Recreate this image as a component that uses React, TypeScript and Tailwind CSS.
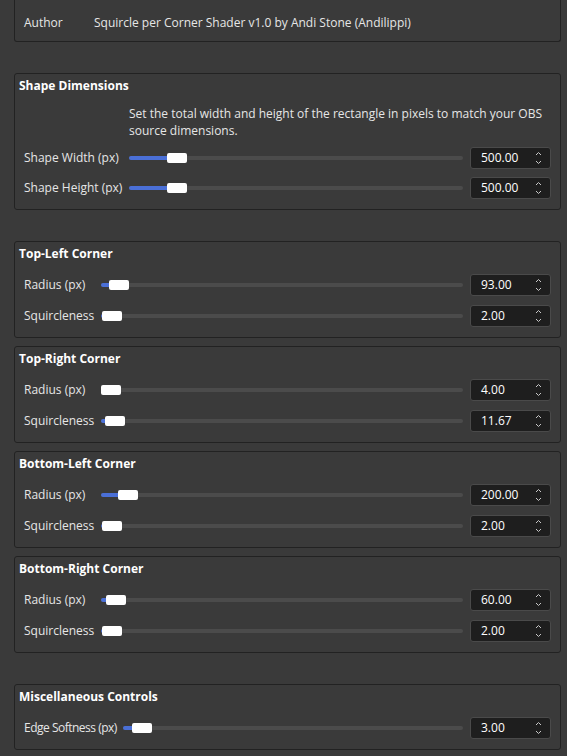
import React from "react";

type Row = { label: string; value: string; thumb: number };
type Group = { title: string; labelW: string; labelCls?: string; rows: Row[]; note?: string };

const shape: Group = {
  title: "Shape Dimensions",
  labelW: "grid-cols-[99px_1fr]",
  note: "Set the total width and height of the rectangle in pixels to match your OBS source dimensions.",
  rows: [
    { label: "Shape Width (px)", value: "500.00", thumb: 38 },
    { label: "Shape Height (px)", value: "500.00", thumb: 38 },
  ],
};

const corners: Group[] = [
  {
    title: "Top-Left Corner",
    labelW: "grid-cols-[71px_1fr]",
    rows: [
      { label: "Radius (px)", value: "93.00", thumb: 8 },
      { label: "Squircleness", value: "2.00", thumb: 1 },
    ],
  },
  {
    title: "Top-Right Corner",
    labelW: "grid-cols-[71px_1fr]",
    rows: [
      { label: "Radius (px)", value: "4.00", thumb: 0 },
      { label: "Squircleness", value: "11.67", thumb: 4 },
    ],
  },
  {
    title: "Bottom-Left Corner",
    labelW: "grid-cols-[71px_1fr]",
    rows: [
      { label: "Radius (px)", value: "200.00", thumb: 17 },
      { label: "Squircleness", value: "2.00", thumb: 1 },
    ],
  },
  {
    title: "Bottom-Right Corner",
    labelW: "grid-cols-[71px_1fr]",
    rows: [
      { label: "Radius (px)", value: "60.00", thumb: 5 },
      { label: "Squircleness", value: "2.00", thumb: 1 },
    ],
  },
];

const misc: Group = {
  title: "Miscellaneous Controls",
  labelW: "grid-cols-[93px_1fr]",
  labelCls: "tracking-[-0.5px]",
  rows: [{ label: "Edge Softness (px)", value: "3.00", thumb: 9 }],
};

function Slider({ thumb }: { thumb: number }) {
  return (
    <div className="relative h-[22px] flex-1">
      <div className="absolute left-0 right-0 top-[9px] h-[4px] rounded-[2px] bg-[#4b4b4b]" />
      <div
        className="absolute left-0 top-[9px] h-[4px] rounded-[2px] bg-[#4a6fd6]"
        style={{ width: thumb + 6 }}
      />
      <div
        className="absolute top-[6px] h-[10px] w-[20px] rounded-[2px] bg-white"
        style={{ left: thumb }}
      />
    </div>
  );
}

function SpinBox({ value }: { value: string }) {
  return (
    <div className="relative flex h-[22px] w-[81px] shrink-0 items-center rounded-[3px] border border-[#4a4a4a] bg-[#1e1e1e] pl-[10px] text-[12px] text-white">
      {value}
      <svg className="absolute right-[8px] top-[3px]" width="7" height="5" viewBox="0 0 7 5">
        <path d="M1 4 L3.5 1.5 L6 4" fill="none" stroke="#c8c8c8" strokeWidth="1" />
      </svg>
      <svg className="absolute bottom-[3px] right-[8px]" width="7" height="5" viewBox="0 0 7 5">
        <path d="M1 1 L3.5 3.5 L6 1" fill="none" stroke="#c8c8c8" strokeWidth="1" />
      </svg>
    </div>
  );
}

function Panel({ g }: { g: Group }) {
  return (
    <div className="rounded-[3px] border border-[#222222] bg-[#3a3a3a] pb-[10px] pl-[4px] pr-[9px] pt-[4px]">
      <div className="h-[16px] text-[12px] font-bold leading-[16px] text-white">{g.title}</div>
      <div
        className={`grid ${g.labelW} gap-x-[6px] pl-[5px] ${
          g.note ? "gap-y-[8px] pt-[11px]" : "gap-y-[9px] pt-[12px]"
        }`}
      >
        {g.note && (
          <>
            <div />
            <div className="text-[12px] leading-[17px] text-[#e6e6e6]">{g.note}</div>
          </>
        )}
        {g.rows.map((r) => (
          <React.Fragment key={r.label}>
            <div
              className={`flex h-[22px] items-center whitespace-nowrap text-[12px] text-[#e6e6e6] ${g.labelCls ?? ""}`}
            >
              {r.label}
            </div>
            <div className="flex items-center gap-[7px]">
              <Slider thumb={r.thumb} />
              <SpinBox value={r.value} />
            </div>
          </React.Fragment>
        ))}
      </div>
    </div>
  );
}

export default function App() {
  return (
    <div
      className="min-h-[756px] bg-[#3a3a3a] pl-[14px] pr-[6px] text-[12px]"
      style={{ fontFamily: '"Open Sans", "Noto Sans", sans-serif' }}
    >
      {/* Author header, scrolled partly out of view */}
      <div className="flex h-[42px] items-end rounded-b-[3px] border border-t-0 border-[#222222] bg-[#3a3a3a] pb-[10px] pl-[9px]">
        <div className="flex h-[16px] items-center text-[#e6e6e6]">
          <span className="w-[70px]">Author</span>
          <span>Squircle per Corner Shader v1.0 by Andi Stone (Andilippi)</span>
        </div>
      </div>

      <div className="mt-[31px]">
        <Panel g={shape} />
      </div>

      <div className="mt-[31px] flex flex-col gap-[8px]">
        {corners.map((c) => (
          <Panel key={c.title} g={c} />
        ))}
      </div>

      <div className="mt-[31px]">
        <Panel g={misc} />
      </div>
    </div>
  );
}
